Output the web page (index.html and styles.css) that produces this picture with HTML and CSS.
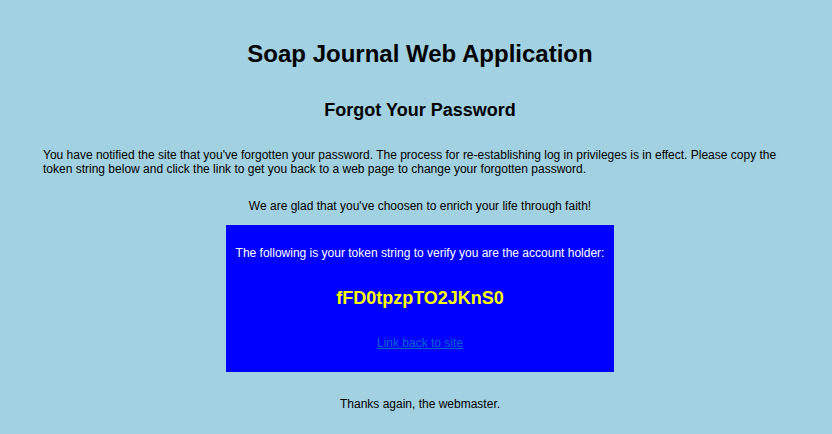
FILE: index.html
```html
<!DOCTYPE html>
<html lang="en">
<head>
<meta charset="utf-8">
<title>Forgot Your Password</title>
<link rel="stylesheet" href="styles.css">
</head>
<body>
<main class="page">
  <h1 class="title">Soap Journal Web Application</h1>
  <h2 class="subtitle">Forgot Your Password</h2>
  <p class="intro">You have notified the site that you've forgotten your password. The process for re-establishing log in privileges is in effect. Please copy the token string below and click the link to get you back to a web page to change your forgotten password.</p>
  <p class="center glad">We are glad that you've choosen to enrich your life through faith!</p>
  <section class="token-box">
    <p class="token-label">The following is your token string to verify you are the account holder:</p>
    <p class="token">fFD0tpzpTO2JKnS0</p>
    <p class="token-link"><a href="#">Link back to site</a></p>
  </section>
  <p class="center thanks">Thanks again, the webmaster.</p>
</main>
</body>
</html>
```

FILE: styles.css
```css
html, body {
  margin: 0;
  padding: 0;
}
body {
  background: #a2d1e1;
  color: #000;
  font-family: "Liberation Sans", Arial, Helvetica, sans-serif;
  font-size: 12px;
  line-height: 14px;
  height: 434px;
  overflow: hidden;
}
.page {
  padding: 0 35px 0 43px;
}
.title {
  margin: 40px 0 0;
  font-size: 24px;
  line-height: 28px;
  font-weight: bold;
  text-align: center;
}
.subtitle {
  margin: 32px 0 0;
  font-size: 18px;
  line-height: 21px;
  font-weight: bold;
  text-align: center;
}
.intro {
  margin: 27px 0 0;
}
.center {
  text-align: center;
}
.glad {
  margin: 23px 0 0;
}
.token-box {
  width: 388px;
  box-sizing: border-box;
  margin: 12px auto 0;
  padding: 21px 0 22px;
  background: #0000ff;
  text-align: center;
}
.token-box p {
  margin: 0;
}
.token-label {
  color: #fff;
}
.token {
  margin-top: 28px !important;
  color: #ffff00;
  font-size: 18px;
  line-height: 21px;
  font-weight: bold;
}
.token-link {
  margin-top: 27px !important;
}
.token-link a {
  color: #0066cc;
  text-decoration: underline;
}
.thanks {
  margin: 25px 0 0;
}
```
